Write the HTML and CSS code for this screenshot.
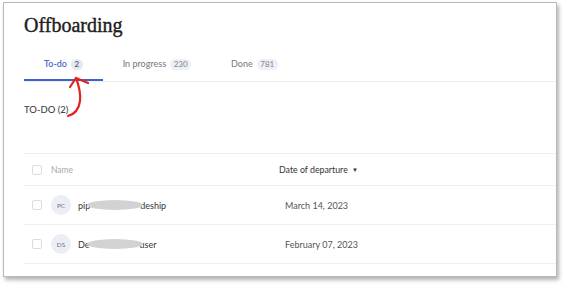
FILE: index.html
```html
<!DOCTYPE html>
<html lang="en">
<head>
  <meta charset="UTF-8" />
  <meta name="viewport" content="width=device-width, initial-scale=1.0"/>
  <title>Offboarding</title>
  <link rel="stylesheet" href="styles.css">
</head>
<body>

<div class="window">
  <h1>Offboarding</h1>

  <div class="tabs">
    <div class="tab active">To-do <span class="count">2</span></div>
    <div class="tab">In progress <span class="count">230</span></div>
    <div class="tab">Done <span class="count">781</span></div>
  </div>

  <h2>TO-DO (2)</h2>

  <div class="tabla">
    <div class="fila cabecera">
      <span class="check"></span>
      <span class="col-nombre">Name</span>
      <span class="col-fecha">Date of departure <span class="flecha">&#9660;</span></span>
    </div>
    <div class="fila">
      <span class="check"></span>
      <span class="col-nombre"><span class="avatar">PC</span>pip<span class="borron"></span>deship</span>
      <span class="col-fecha">March 14, 2023</span>
    </div>
    <div class="fila">
      <span class="check"></span>
      <span class="col-nombre"><span class="avatar">DS</span>De<span class="borron"></span>user</span>
      <span class="col-fecha">February 07, 2023</span>
    </div>
  </div>
</div>

<!-- anotación a mano -->
<svg class="marca" width="563" height="285" viewBox="0 0 563 285">
  <path d="M68 116 C75 114 79 109 80 101 C81 93 79 86 76 78" fill="none" stroke="#e4241c" stroke-width="2.2" stroke-linecap="round"/>
  <path d="M70 87 L76 78 L88 83" fill="none" stroke="#e4241c" stroke-width="2.2" stroke-linecap="round" stroke-linejoin="round"/>
</svg>

</body>
</html>
```

FILE: styles.css
```css
body {
  margin: 0;
  background: #fff;
  font-family: Lato, "Open Sans", sans-serif;
  position: relative;
  width: 563px;
  height: 285px;
  overflow: hidden;
}

.window {
  margin: 2px 0 0 3px;
  width: 554px;
  height: 275px;
  border: 1px solid #b9b9b9;
  box-shadow: 2px 3px 4px rgba(0,0,0,0.3);
  padding-left: 20px;
  box-sizing: border-box;
  background: #fff;
}

h1 {
  margin: 0;
  padding-top: 10px;
  font-family: "Liberation Serif", serif;
  font-weight: normal;
  font-size: 20px;
  line-height: 24px;
  color: #1d1d1d;
  -webkit-text-stroke: 0.4px #1d1d1d;
}

.tabs {
  display: flex;
  margin-top: 13px;
  border-bottom: 1px solid #eeeef0;
}

.tab {
  padding: 8px 20px 9px 20px;
  line-height: 12px;
  font-size: 9px;
  font-weight: 500;
  color: #7c808a;
  border-bottom: 2px solid transparent;
  display: flex;
  align-items: center;
  gap: 4px;
}

.tab.active {
  font-weight: 600;
  color: #4d68c9;
  border-bottom-color: #3f60d8;
}

.count {
  background: #eef0f6;
  border-radius: 6px;
  padding: 0 3.5px;
  height: 11px;
  line-height: 11px;
  font-size: 8px;
  font-weight: 500;
  color: #8a8e98;
}

.tab.active .count {
  background: #e3e8f4;
  color: #555b6a;
  font-weight: 600;
}

h2 {
  margin: 21px 0 0 0;
  font-size: 9.5px;
  line-height: 14px;
  font-weight: 500;
  color: #444;
}

.tabla {
  margin-top: 36px;
  border-top: 1px solid #efefef;
}

.fila {
  display: grid;
  grid-template-columns: 10px 219px 1fr;
  column-gap: 9px;
  align-items: center;
  padding-left: 8px;
  height: 38px;
  border-bottom: 1px solid #efefef;
  font-size: 9px;
  color: #333;
}

.cabecera {
  height: 31px;
}

.check {
  width: 10px;
  height: 10px;
  box-sizing: border-box;
  border: 1px solid #dcdcdc;
  border-radius: 2px;
}

.cabecera .col-nombre {
  color: #a9a9a9;
  font-size: 8.5px;
}

.cabecera .col-fecha {
  color: #333;
  font-size: 8.8px;
  padding-left: 0;
}

.flecha {
  font-size: 6px;
  margin-left: 2px;
  vertical-align: 1px;
}

.col-nombre {
  display: flex;
  align-items: center;
}

.col-fecha {
  padding-left: 6px;
  color: #555;
}

.avatar {
  width: 20px;
  height: 20px;
  border-radius: 50%;
  background: #eceef5;
  color: #6c6f78;
  font-size: 6.5px;
  display: flex;
  align-items: center;
  justify-content: center;
  margin-right: 7px;
}

.borron {
  display: inline-block;
  width: 56px;
  height: 10px;
  border-radius: 50%;
  background: #d2d2d2;
  margin: 0 -3px;
  position: relative;
  z-index: 1;
}

.marca {
  position: absolute;
  left: 0;
  top: 0;
}
```
